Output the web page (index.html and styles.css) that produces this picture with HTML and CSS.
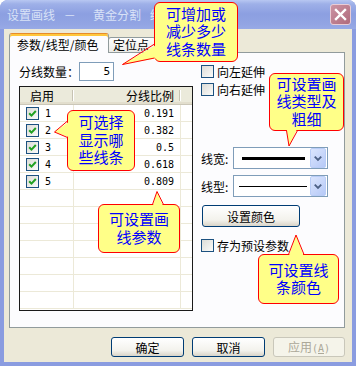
FILE: index.html
```html
<!DOCTYPE html>
<html lang="zh-CN">
<head>
  <meta charset="UTF-8" />
  <meta name="viewport" content="width=device-width, initial-scale=1.0"/>
  <title>设置画线 － 黄金分割</title>
  <link rel="stylesheet" href="styles.css">
</head>
<body>
  <div class="window">
    <div class="titlebar">
      <span class="title">设置画线 － &nbsp;黄金分割 线型</span>
      <span class="close">
        <svg width="19" height="19" viewBox="0 0 19 19"><path d="M5 5 L14 14 M14 5 L5 14" stroke="#fff" stroke-width="2.4" stroke-linecap="square"/></svg>
      </span>
    </div>

    <div class="client">
      <div class="tabs">
        <div class="tab active">参数/线型/颜色</div>
        <div class="tab">定位点</div>
      </div>

      <div class="panel">
        <div class="left-col">
          <div class="count-row">
            <span>分线数量：</span>
            <div class="edit num">5</div>
          </div>

          <div class="listview">
            <div class="lv-head">
              <div class="hcell">启用</div>
              <div class="hcell right">分线比例</div>
              <div class="hcell"></div>
            </div>
            <div class="lv-row">
              <div class="cell"><span class="cb"><svg width="11" height="11" viewBox="0 0 11 11"><polyline points="2.2,5.2 4.5,7.6 8.8,3" fill="none" stroke="#21a121" stroke-width="2"/></svg></span><span class="num">1</span></div>
              <div class="cell val num">0.191</div>
              <div class="cell"></div>
            </div>
            <div class="lv-row">
              <div class="cell"><span class="cb"><svg width="11" height="11" viewBox="0 0 11 11"><polyline points="2.2,5.2 4.5,7.6 8.8,3" fill="none" stroke="#21a121" stroke-width="2"/></svg></span><span class="num">2</span></div>
              <div class="cell val num">0.382</div>
              <div class="cell"></div>
            </div>
            <div class="lv-row">
              <div class="cell"><span class="cb"><svg width="11" height="11" viewBox="0 0 11 11"><polyline points="2.2,5.2 4.5,7.6 8.8,3" fill="none" stroke="#21a121" stroke-width="2"/></svg></span><span class="num">3</span></div>
              <div class="cell val num">0.5</div>
              <div class="cell"></div>
            </div>
            <div class="lv-row">
              <div class="cell"><span class="cb"><svg width="11" height="11" viewBox="0 0 11 11"><polyline points="2.2,5.2 4.5,7.6 8.8,3" fill="none" stroke="#21a121" stroke-width="2"/></svg></span><span class="num">4</span></div>
              <div class="cell val num">0.618</div>
              <div class="cell"></div>
            </div>
            <div class="lv-row">
              <div class="cell"><span class="cb"><svg width="11" height="11" viewBox="0 0 11 11"><polyline points="2.2,5.2 4.5,7.6 8.8,3" fill="none" stroke="#21a121" stroke-width="2"/></svg></span><span class="num">5</span></div>
              <div class="cell val num">0.809</div>
              <div class="cell"></div>
            </div>
            <div class="lv-row"><div class="cell"></div><div class="cell"></div><div class="cell"></div></div>
            <div class="lv-row"><div class="cell"></div><div class="cell"></div><div class="cell"></div></div>
            <div class="lv-row"><div class="cell"></div><div class="cell"></div><div class="cell"></div></div>
            <div class="lv-row"><div class="cell"></div><div class="cell"></div><div class="cell"></div></div>
            <div class="lv-row"><div class="cell"></div><div class="cell"></div><div class="cell"></div></div>
            <div class="lv-row"><div class="cell"></div><div class="cell"></div><div class="cell"></div></div>
            <div class="lv-row"><div class="cell"></div><div class="cell"></div><div class="cell"></div></div>
          </div>
        </div>

        <div class="right-col">
          <div class="check-row"><span class="cb"></span>向左延伸</div>
          <div class="check-row"><span class="cb"></span>向右延伸</div>

          <div class="combo-row first">
            <span class="combo-label">线宽:</span>
            <div class="combo">
              <span class="line thick"></span>
              <span class="drop"><svg width="15" height="18" viewBox="0 0 15 18"><polyline points="4,7.5 7.5,11 11,7.5" fill="none" stroke="#4d6185" stroke-width="2"/></svg></span>
            </div>
          </div>
          <div class="combo-row">
            <span class="combo-label">线型:</span>
            <div class="combo">
              <span class="line thin"></span>
              <span class="drop"><svg width="15" height="18" viewBox="0 0 15 18"><polyline points="4,7.5 7.5,11 11,7.5" fill="none" stroke="#4d6185" stroke-width="2"/></svg></span>
            </div>
          </div>

          <button class="btn color-btn">设置颜色</button>

          <div class="check-row preset"><span class="cb"></span>存为预设参数</div>
        </div>
      </div>

      <div class="buttons">
        <button class="btn">确定</button>
        <button class="btn">取消</button>
        <button class="btn" disabled>应用<span class="num">(<u>A</u>)</span></button>
      </div>
    </div>

    <!-- 提示气泡 -->
    <div class="callout c1">可增加或<br>减少多少<br>线条数量</div>
    <div class="callout c2">可选择<br>显示哪<br>些线条</div>
    <div class="callout c3">可设置画<br>线参数</div>
    <div class="callout c4">可设置画<br>线类型及<br>粗细</div>
    <div class="callout c5">可设置线<br>条颜色</div>

    <svg class="tails" width="356" height="366" viewBox="0 0 356 366">
      <g fill="#ffff88">
        <polygon points="158,44 122,64.5 158,58"/>
        <polygon points="70,121 54.5,132 70,137.5"/>
        <polygon points="152.5,207 157,191.5 163.5,207"/>
        <polygon points="286.5,128 289,146 297.5,128"/>
        <polygon points="288.5,257 296,235 304,257"/>
      </g>
      <g fill="none" stroke="#f00" stroke-width="1">
        <polyline points="154.5,44 122.5,64.5 154.5,58"/>
        <polyline points="67.5,121 54.5,132 67.5,137.5"/>
        <polyline points="152.5,204.5 157,191.5 163.5,204.5"/>
        <polyline points="286.5,130.5 289,146 297.5,130.5"/>
        <polyline points="288.5,254.5 296,235 304,254.5"/>
      </g>
    </svg>
  </div>
</body>
</html>
```

FILE: styles.css
```css
body {
  margin: 0;
  font-family: "Noto Sans CJK SC", sans-serif;
  font-size: 12px;
  color: #000;
}
.num {
  font-family: "DejaVu Sans Mono", monospace;
  font-size: 10px;
}

/* window frame */
.window {
  position: relative;
  width: 356px;
  height: 366px;
  display: flex;
  flex-direction: column;
  background: #8a9ce0;
  border-radius: 8px 8px 0 0;
  overflow: hidden;
}
.titlebar {
  flex: none;
  height: 29px;
  display: flex;
  align-items: center;
  justify-content: space-between;
  padding: 0 5px 0 7px;
  background: linear-gradient(#b8c7f2 0, #9eb0e8 4px, #8c9fe1 14px, #92a4e3 24px, #98aae6 29px);
  color: #d9e2f7;
}
.title {
  white-space: nowrap;
  word-spacing: 6px;
  line-height: 14px;
}
.close {
  width: 21px;
  height: 21px;
  box-sizing: border-box;
  border: 1px solid #e8ccd6;
  border-radius: 3px;
  background: linear-gradient(135deg, #cb93a3, #b06a7c);
  display: flex;
}

.client {
  flex: 1;
  margin: 0 4px 4px;
  padding: 4px 7px 0 5px;
  background: #ece9d8;
  display: flex;
  flex-direction: column;
}

/* tabs */
.tabs {
  height: 20px;
  display: flex;
  align-items: flex-end;
  position: relative;
  z-index: 1;
}
.tab {
  box-sizing: border-box;
  height: 15px;
  margin: 0 0 1px -1px;
  width: 48px;
  padding-left: 4px;
  border: 1px solid #919b9c;
  border-bottom: none;
  border-radius: 3px 3px 0 0;
  background: linear-gradient(#fefefe, #ecebe6);
  line-height: 14px;
  white-space: nowrap;
}
.tab.active {
  position: relative;
  z-index: 1;
  width: 100px;
  height: 20px;
  margin: 0;
  padding-left: 7px;
  border-top: 1px solid #e68b2c;
  box-shadow: inset 0 2px 0 #ffc73c;
  background: #fcfcfe;
  line-height: 21px;
}

.panel {
  margin-top: -1px;
  height: 276px;
  box-sizing: border-box;
  border: 1px solid #919b9c;
  background: #fcfcfe;
  display: flex;
  gap: 8px;
  padding: 9px 0 0 9px;
}

/* left column */
.left-col {
  width: 174px;
  display: flex;
  flex-direction: column;
}
.count-row {
  height: 19px;
  display: flex;
  align-items: center;
}
.edit {
  width: 35px;
  height: 19px;
  box-sizing: border-box;
  border: 1px solid #7f9db9;
  background: #fff;
  text-align: right;
  padding-right: 3px;
  line-height: 17px;
  font-size: 11px;
}
.listview {
  margin-top: 5px;
  height: 225px;
  box-sizing: border-box;
  border: 1px solid #1a1a1a;
  background: #fff;
  overflow: hidden;
}
.lv-head,
.lv-row {
  display: grid;
  grid-template-columns: 54px 107px 1fr;
}
.lv-head {
  height: 18px;
  box-sizing: border-box;
  background: #ebeadb;
  border-bottom: 1px solid #cbc7b8;
  box-shadow: inset 0 -2px 0 #e2decd;
}
.hcell {
  position: relative;
  padding-left: 10px;
  line-height: 17px;
}
.hcell.right {
  text-align: right;
  padding: 0 7px 0 0;
}
.hcell:not(:last-child)::after {
  content: "";
  position: absolute;
  right: 1px;
  top: 3px;
  bottom: 3px;
  width: 1px;
  background: #c7c3b3;
  box-shadow: 1px 0 0 #fff;
}
.lv-row {
  height: 17px;
  box-sizing: border-box;
  border-bottom: 1px solid #ece9d8;
}
.cell {
  display: flex;
  align-items: center;
  gap: 6px;
  padding-left: 6px;
}
.cell:not(:last-child) {
  border-right: 1px solid #ece9d8;
}
.cell.val {
  justify-content: flex-end;
  padding: 0 6px 0 0;
}

.cb {
  flex: none;
  width: 13px;
  height: 13px;
  box-sizing: border-box;
  border: 1px solid #1c5180;
  background: linear-gradient(135deg, #dcdcd7, #fbfbf9);
  display: inline-flex;
}

/* right column */
.right-col {
  display: flex;
  flex-direction: column;
  align-items: flex-start;
}
.check-row {
  height: 18px;
  display: flex;
  align-items: center;
  gap: 3px;
  white-space: nowrap;
}
.check-row.preset {
  margin-top: 9px;
}
.combo-row {
  margin-top: 6px;
  display: flex;
  align-items: center;
}
.combo-row.first {
  margin-top: 49px;
}
.combo-label {
  flex: none;
  width: 32px;
  white-space: nowrap;
}
.combo {
  flex: none;
  width: 95px;
  height: 22px;
  box-sizing: border-box;
  border: 1px solid #7f9db9;
  background: #fff;
  display: flex;
  align-items: center;
  justify-content: space-between;
  padding: 0 1px 0 5px;
}
.line {
  height: 1px;
  background: #000;
  margin-left: 3px;
  width: 64px;
}
.line.thick {
  height: 3px;
  width: 63px;
}
.line.thin {
  width: 68px;
  margin-left: 0;
}
.drop {
  width: 16px;
  height: 20px;
  box-sizing: border-box;
  border: 1px solid #b9cdf7;
  border-radius: 2px;
  background: linear-gradient(135deg, #dbe5fd, #b6c9f7);
  display: flex;
}

/* buttons */
.btn {
  width: 73px;
  height: 20px;
  padding: 0;
  box-sizing: border-box;
  border: 1px solid #003c74;
  border-radius: 3px;
  background: linear-gradient(#ffffff, #f3f2ec 70%, #d9d4c8);
  font-family: inherit;
  font-size: 12px;
  line-height: 17px;
  color: #000;
}
.btn:disabled {
  width: 72px;
  border-color: #c9c7ba;
  background: #f5f4ea;
  color: #aca899;
}
.color-btn {
  width: 98px;
  height: 22px;
  margin: 8px 0 0 1px;
}
.buttons {
  display: flex;
  justify-content: flex-end;
  gap: 8px;
  margin-top: 9px;
}

/* callouts */
.callout {
  position: absolute;
  z-index: 2;
  box-sizing: border-box;
  border: 1px solid #f00;
  border-radius: 6px;
  background: #ffff88;
  color: #00f;
  font-size: 15px;
  line-height: 17.5px;
  text-align: center;
  display: flex;
  align-items: center;
  justify-content: center;
  padding-bottom: 2px;
}
.c1 { left: 154px; top: 2px;   width: 84px; height: 60px; }
.c2 { left: 67px;  top: 110px; width: 68px; height: 61px; }
.c3 { left: 98px;  top: 204px; width: 82px; height: 49px; }
.c4 { left: 269px; top: 73px;  width: 75px; height: 58px; }
.c5 { left: 258px; top: 254px; width: 81px; height: 50px; }
.tails {
  position: absolute;
  left: 0;
  top: 0;
  z-index: 3;
  pointer-events: none;
}
```
